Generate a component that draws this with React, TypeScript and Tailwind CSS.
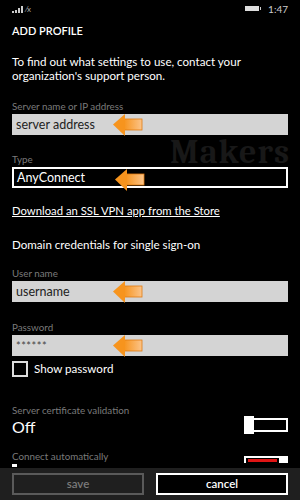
import React from "react";

const Arrow = () => (
  <svg width="32" height="24" viewBox="0 0 32 24" className="absolute left-[100px] top-[-1px]">
    <defs>
      <linearGradient id="shaft" x1="0" y1="0" x2="1" y2="0">
        <stop offset="0" stopColor="#f7941d" />
        <stop offset="1" stopColor="#fbc48a" />
      </linearGradient>
    </defs>
    <rect x="12" y="6" width="18" height="11" fill="url(#shaft)" stroke="#e07b10" strokeWidth="0.8" />
    <polygon points="1,11.5 13,1 13,23" fill="#f7941d" />
  </svg>
);

const Label = ({ children }: { children: React.ReactNode }) => (
  <div className="text-[9.8px] leading-[12px] text-[#7a7a7a]">{children}</div>
);

const Field = ({ value, dark, stars }: { value: string; dark?: boolean; stars?: boolean }) => (
  <div
    className={
      dark
        ? "relative mt-[2px] h-[21px] border-2 border-white bg-black px-[3px] text-[12.5px] leading-[17px] text-white"
        : "relative mt-[2px] h-[21px] bg-[#d4d4d4] px-[4px] text-[12.5px] leading-[21px] text-[#222]"
    }
  >
    <span className={stars ? "text-[11px] tracking-[0.5px] text-[#444]" : ""}>{value}</span>
    <Arrow />
  </div>
);

export default function App() {
  return (
    <div
      className="relative flex h-[500px] w-[300px] flex-col overflow-hidden bg-black text-white"
      style={{ fontFamily: 'Lato, "Open Sans", sans-serif' }}
    >
      {/* status bar */}
      <div className="flex h-[17px] items-center justify-between pl-[12px] pr-[12px]">
        <div className="flex items-end gap-[1px]">
          <div className="h-[2px] w-[2px] bg-[#ccc]" />
          <div className="h-[3px] w-[2px] bg-[#ccc]" />
          <div className="h-[5px] w-[2px] bg-[#ccc]" />
          <div className="h-[7px] w-[2px] bg-[#ccc]" />
          <span className="ml-[2px] text-[8px] leading-[8px] text-[#aaa]">⁄x</span>
        </div>
        <div className="flex items-center gap-[7px]">
          <div className="flex items-center">
            <div className="h-[5px] w-[14px] bg-[#ddd]" />
            <div className="ml-[1px] h-[3px] w-[1px] bg-[#ccc]" />
          </div>
          <span className="text-[10px] leading-[10px] text-[#ccc]">1:47</span>
        </div>
      </div>

      <div className="relative flex-1 px-[12px]">
        <div className="pt-[7px] text-[11px] font-semibold leading-[14px]">ADD PROFILE</div>
        <p className="mt-[17px] text-[11.6px] leading-[14px]">
          To find out what settings to use, contact your organization's support person.
        </p>

        <div className="pointer-events-none absolute left-[170px] top-[118px] font-serif text-[34px] font-bold leading-[34px] tracking-[1px] text-[#181818]">
          Makers
        </div>

        <div className="relative mt-[17px]">
          <Label>Server name or IP address</Label>
          <Field value="server address" />
        </div>
        <div className="relative mt-[18px]">
          <Label>Type</Label>
          <Field value="AnyConnect" dark />
        </div>

        <div className="mt-[15px] text-[11.3px] leading-[16px] underline">
          Download an SSL VPN app from the Store
        </div>

        <div className="mt-[18px] text-[11.6px] leading-[16px]">Domain credentials for single sign-on</div>

        <div className="relative mt-[14px]">
          <Label>User name</Label>
          <Field value="username" />
        </div>
        <div className="relative mt-[19px]">
          <Label>Password</Label>
          <Field value="******" stars />
        </div>

        <div className="mt-[5px] flex items-center gap-[6px]">
          <div className="h-[16px] w-[16px] border-2 border-[#ddd]" />
          <span className="text-[11.6px] leading-[16px]">Show password</span>
        </div>

        <div className="mt-[27px] flex items-end justify-between">
          <div>
            <Label>Server certificate validation</Label>
            <div className="mt-[2px] text-[16px] leading-[18px]">Off</div>
          </div>
          <div className="mb-[2px] flex items-center">
            <div className="h-[18px] w-[10px] bg-white" />
            <div className="h-[14px] w-[34px] border-2 border-l-0 border-white" />
          </div>
        </div>

        <div className="mt-[14px] flex items-start justify-between">
          <div>
            <Label>Connect automatically</Label>
            <div className="mt-[2px] h-[3px] w-[5px] bg-white" />
          </div>
          <div className="mt-[6px] flex items-end">
            <div className="flex h-[7px] w-[35px] items-center border-2 border-b-0 border-r-0 border-white pl-[2px]">
              <div className="h-[3px] w-[29px] bg-[#e01515]" />
            </div>
            <div className="h-[7px] w-[9px] bg-white" />
          </div>
        </div>
      </div>

      {/* app bar */}
      <div className="absolute bottom-0 left-0 right-0 flex h-[32px] gap-[12px] bg-[#1f1f1f] px-[12px] pt-[5px]">
        <div className="flex h-[22px] flex-1 items-center justify-center border-2 border-[#5a5a5a] text-[11.5px] font-semibold text-[#7a7a7a]">
          save
        </div>
        <div className="flex h-[22px] flex-1 items-center justify-center border-2 border-white bg-black text-[11.5px] font-semibold text-white">
          cancel
        </div>
      </div>
    </div>
  );
}
